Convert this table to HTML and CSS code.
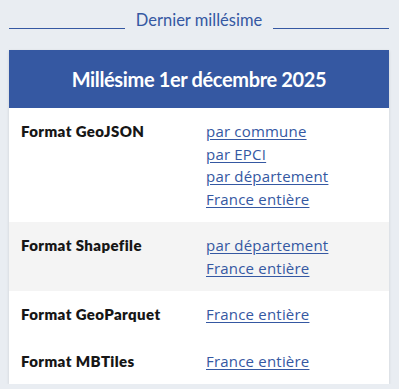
FILE: index.html
```html
<!DOCTYPE html>
<html lang="fr">
<head>
<meta charset="utf-8">
<link rel="stylesheet" href="styles.css">
</head>
<body>
<div class="page">
  <div class="divider">
    <span class="line"></span>
    <span class="divider-text">Dernier millésime</span>
    <span class="line"></span>
  </div>
  <div class="card">
    <div class="card-header">Millésime 1er décembre 2025</div>
    <div class="row">
      <div class="label">Format GeoJSON</div>
      <div class="links">
        <a href="#">par commune</a>
        <a href="#">par EPCI</a>
        <a href="#">par département</a>
        <a href="#">France entière</a>
      </div>
    </div>
    <div class="row alt">
      <div class="label">Format Shapefile</div>
      <div class="links">
        <a href="#">par département</a>
        <a href="#">France entière</a>
      </div>
    </div>
    <div class="row">
      <div class="label">Format GeoParquet</div>
      <div class="links">
        <a href="#">France entière</a>
      </div>
    </div>
    <div class="row">
      <div class="label">Format MBTiles</div>
      <div class="links">
        <a href="#">France entière</a>
      </div>
    </div>
  </div>
</div>
</body>
</html>
```
FILE: styles.css
```css
html, body {
  margin: 0;
  padding: 0;
  background: #e9edf2;
}
body {
  font-family: "Open Sans", "Noto Sans", sans-serif;
  color: #161616;
}
.page {
  padding: 9px 10px 0 9px;
}
.divider {
  display: flex;
  align-items: flex-end;
  gap: 11px;
  height: 22px;
}
.line {
  flex: 1;
  border-bottom: 1.5px solid #3558a2;
  margin-bottom: 2px;
}
.divider-text {
  font-family: "Lato", sans-serif;
  font-size: 16.5px;
  line-height: 22px;
  color: #3558a2;
}
.card {
  margin-top: 19px;
  background: #fff;
  box-shadow: 0 1px 3px rgba(0, 0, 0, 0.12);
}
.card-header {
  background: #3558a2;
  color: #fff;
  height: 58px;
  display: flex;
  align-items: center;
  justify-content: center;
  font-family: "Lato", sans-serif;
  font-weight: 700;
  font-size: 20px;
  letter-spacing: -0.35px;
}
.row {
  display: grid;
  grid-template-columns: 185px 1fr;
  padding: 12px 12px 12px 12px;
}
.row.alt {
  background: #f4f4f4;
}
.label {
  font-family: "Lato", sans-serif;
  font-weight: 800;
  font-size: 15px;
  line-height: 22.5px;
  letter-spacing: 0.4px;
}
.links {
  display: flex;
  flex-direction: column;
}
.links a {
  font-family: "Open Sans", sans-serif;
  font-size: 15px;
  line-height: 22.5px;
  letter-spacing: 0.2px;
  color: #3558a2;
  text-decoration: underline;
  text-underline-offset: 2px;
}
```
